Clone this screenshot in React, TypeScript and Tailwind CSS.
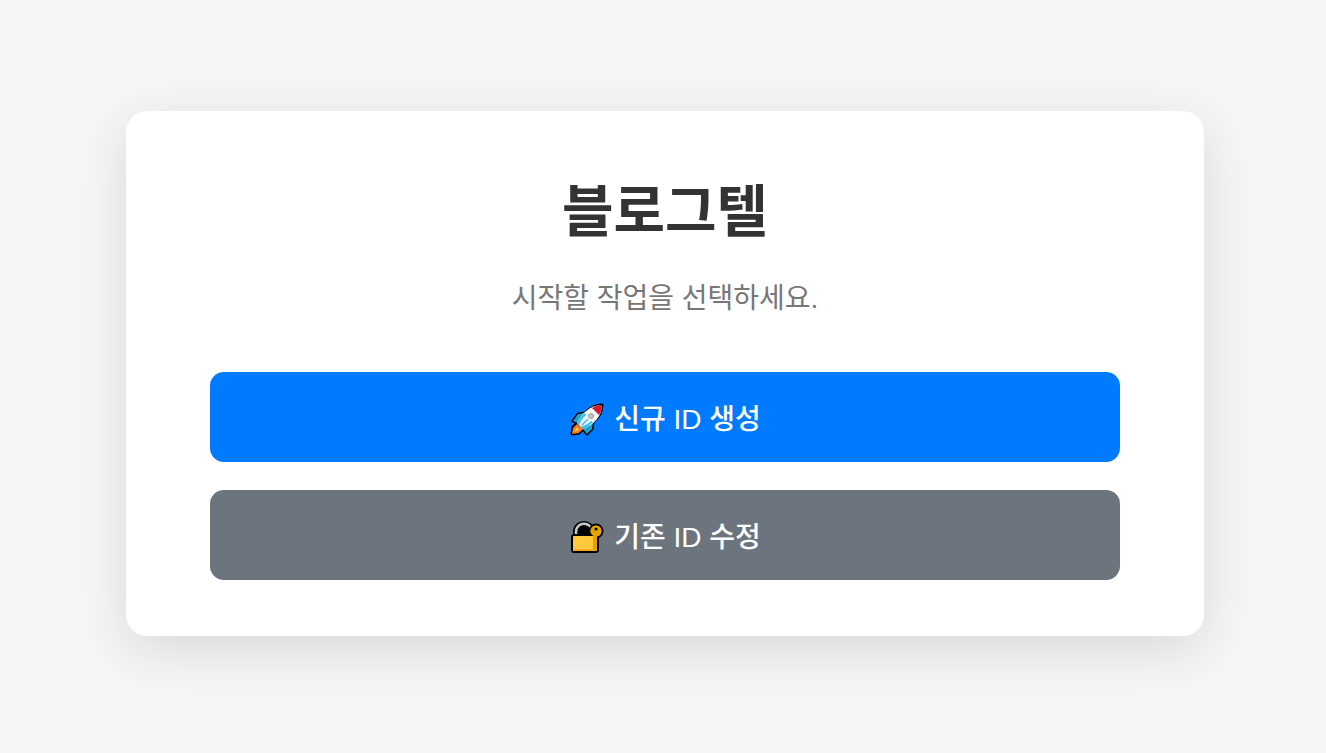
import type { ReactNode } from 'react';

function RocketIcon() {
  return (
    <svg viewBox="0 0 34 34" className="w-[34px] h-[34px] shrink-0" aria-hidden="true">
      {/* dark silhouette behind the coloured parts */}
      <path
        d="M32 2C25 2 20 5 15 10L8 11 3 18 7 20 3 24 2 31 9 30 13 26 17 31 22 26 23 19C29 14 32 9 32 2z"
        fill="#000"
        stroke="#000"
        strokeWidth="3"
        strokeLinejoin="round"
      />
      <path d="M15 10 8 11 3 18 8 20z" fill="#209fc8" />
      <path d="M13 26 17 31 22 26 23 19z" fill="#209fc8" />
      <path d="M7 21 3 25 2 31 9 30 13 26z" fill="#f37a20" />
      <path d="M7 24 4 29 9 27z" fill="#ffc83d" />
      <path d="M32 2C20 2 11 11 7 20L13 26C23 22 32 14 32 2z" fill="#f5f7f9" />
      <path d="M7 20 9 17 16 24 13 26z" fill="#dfe3e8" />
      <path d="M32 2C28 2 25 3 22 5L29 12C31 9 32 6 32 2z" fill="#d5192c" />
      <path d="M15 10C11 13 9 16 7 20L9 22C10 18 13 15 16 12z" fill="#35c1f1" />
      <path d="M13 26C17 24 20 22 23 19L21 18C18 21 15 22 11 24z" fill="#35c1f1" />
      <path d="M12 22 18 16" stroke="#35c1f1" strokeWidth="1.500" />
      <circle cx="21" cy="13" r="2.500" fill="#c4c4c4" stroke="#a0a0a0" />
    </svg>
  );
}

function LockIcon() {
  return (
    <svg viewBox="0 0 34 34" className="w-[34px] h-[34px] shrink-0" aria-hidden="true">
      <path d="M5 17V11C5 -1 23 -1 23 11V17z" fill="#000" stroke="#000" strokeWidth="4" strokeLinejoin="round" />
      <path d="M6 17V11C6 0 22 0 22 11" fill="none" stroke="#c8c8c8" strokeWidth="2.500" />
      <circle cx="26" cy="10" r="6.500" fill="#e5a100" stroke="#000" strokeWidth="2" />
      <rect x="2" y="14" width="26" height="17" rx="2" fill="#ffc83d" stroke="#000" strokeWidth="2" />
      <path d="M3 28H23V30H3z" fill="#f8a527" />
      <path d="M23 15H27V29L25 30 23 29z" fill="#e5a100" />
      <circle cx="26" cy="10" r="5.500" fill="#e5a100" />
      <circle cx="26" cy="8" r="1.500" fill="#000" />
    </svg>
  );
}

interface ActionButtonProps {
  icon: ReactNode;
  before: string;
  after: string;
  className: string;
}

function ActionButton({ icon, before, after, className }: ActionButtonProps) {
  return (
    <button
      type="button"
      className={`flex w-full h-[90px] items-center justify-center gap-[10px] rounded-[14px] pt-[5px] pl-px text-[28px] font-medium text-white cursor-pointer ${className}`}
    >
      {icon}
      <span>
        {before} <span className="font-normal">ID</span> {after}
      </span>
    </button>
  );
}

export default function App() {
  return (
    <main className="flex min-h-screen items-center justify-center bg-[#f4f7f6] pl-1 pb-1.5 font-['Liberation_Sans','Noto_Sans_CJK_KR',sans-serif]">
      <section className="w-full max-w-[1078px] rounded-[21px] bg-white px-[84px] pt-[59px] pb-[56px] text-center shadow-[0_14px_56px_rgba(0,0,0,0.12)]">
        <h1 className="text-[56px] leading-[84px] font-bold text-[#333]">블로그텔</h1>
        <p className="mt-[22px] mb-[51px] text-[28px] leading-[45px] text-[#777]">시작할 작업을 선택하세요.</p>
        <div className="flex flex-col gap-7">
          <ActionButton icon={<RocketIcon />} before="신규" after="생성" className="bg-[#007bff]" />
          <ActionButton icon={<LockIcon />} before="기존" after="수정" className="bg-[#6c757d]" />
        </div>
      </section>
    </main>
  );
}
